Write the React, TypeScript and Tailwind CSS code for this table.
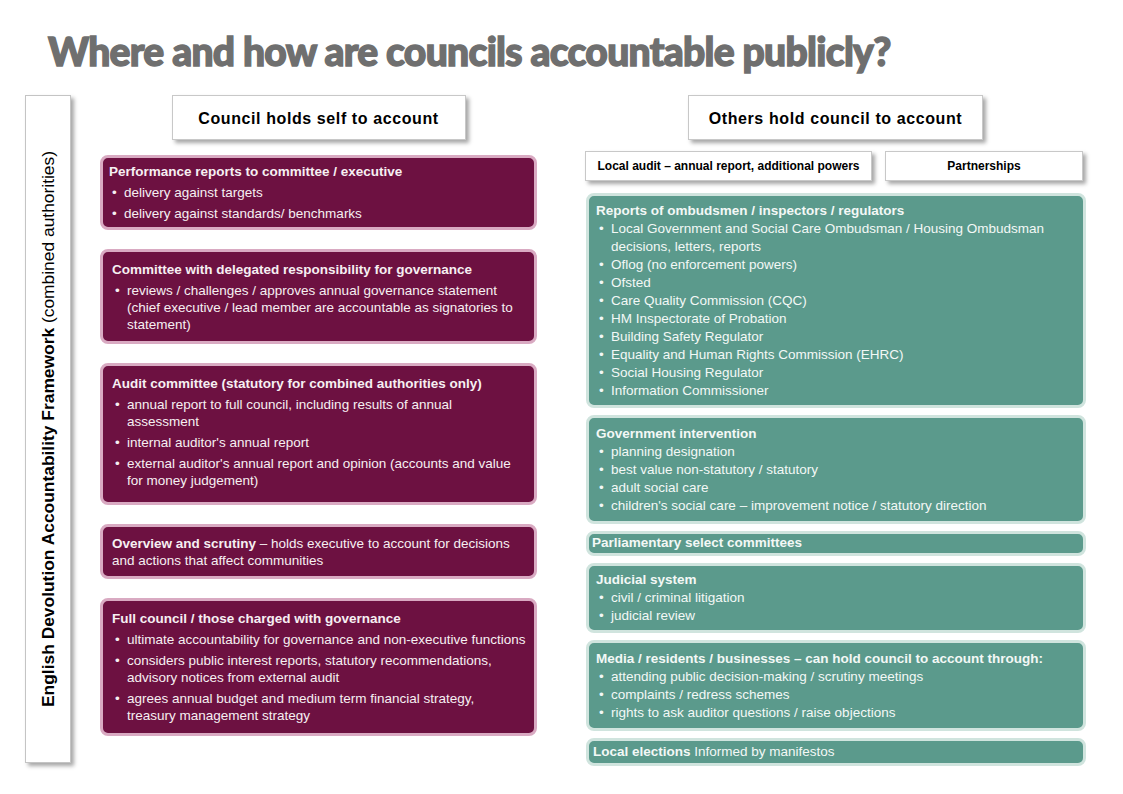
import React from "react";

interface CardProps {
  title: string;
  items: string[];
  h: string;
  pl?: string;
}

function LeftCard({ title, items, h, pl = "pl-[9px]" }: CardProps) {
  return (
    <div className={`${h} ${pl} rounded-[8px] border-[3px] border-[#d9aac2] bg-[#6d1141] pr-[8px] flex flex-col justify-center text-[#f6eff2] text-[13.5px] leading-[17px]`}>
      <div className="font-bold">{title}</div>
      <ul className="mt-[4px] flex flex-col gap-[4px]">
        {items.map((t) => (
          <li key={t} className="flex">
            <span className="w-[15px] pl-[3px] shrink-0">•</span>
            <span>{t}</span>
          </li>
        ))}
      </ul>
    </div>
  );
}

function RightCard({ title, items, h }: CardProps) {
  return (
    <div className={`${h} rounded-[8px] border-[3px] border-[#d0e4de] bg-[#5b9a8c] pl-[7px] pr-[8px] flex flex-col justify-center text-[#f3f8f6] text-[13.5px] leading-[18px]`}>
      <div className="font-bold">{title}</div>
      <ul className="flex flex-col">
        {items.map((t) => (
          <li key={t} className="flex">
            <span className="w-[15px] pl-[3px] shrink-0">•</span>
            <span>{t}</span>
          </li>
        ))}
      </ul>
    </div>
  );
}

const boxShadow = "shadow-[3px_3px_4px_rgba(0,0,0,0.35)]";

export default function App() {
  return (
    <div className="w-[1123px] h-[794px] bg-white overflow-hidden font-['Liberation_Sans',Arial,sans-serif] text-black">
      <div className="h-[95px] pt-[28px] pl-[48px]">
        <h1 className="font-['Lato',sans-serif] font-black text-[39px] leading-[46px] tracking-[-0.7px] text-[#6f6f6f] [-webkit-text-stroke:1.4px_#6f6f6f]">
          Where and how are councils accountable publicly?
        </h1>
      </div>

      <div className="flex pl-[25px]">
        {/* sidebar */}
        <div className={`w-[46px] h-[668px] border border-[#c4c4c4] bg-white ${boxShadow} flex items-center justify-center`}>
          <div className="[writing-mode:vertical-rl] rotate-180 text-[17.4px] leading-[19px] whitespace-nowrap">
            <span className="font-bold">English Devolution Accountability Framework</span> (combined authorities)
          </div>
        </div>

        {/* council holds self to account */}
        <div className="ml-[29px] w-[437px]">
          <div className={`mx-auto w-[294px] h-[45px] pt-[3px] border border-[#c8c8c8] bg-white ${boxShadow} flex items-center justify-center font-bold text-[16px] tracking-[0.6px]`}>
            Council holds self to account
          </div>
          <div className="mt-[15px] flex flex-col gap-[19px]">
            <LeftCard
              h="h-[75px]"
              pl="pl-[6px]"
              title="Performance reports to committee / executive"
              items={["delivery against targets", "delivery against standards/ benchmarks"]}
            />
            <LeftCard
              h="h-[95px]"
              title="Committee with delegated responsibility for governance"
              items={[
                "reviews / challenges / approves annual governance statement (chief executive / lead member are accountable as signatories to statement)",
              ]}
            />
            <LeftCard
              h="h-[142px] pb-[5px]"
              title="Audit committee (statutory for combined authorities only)"
              items={[
                "annual report to full council, including results of annual assessment",
                "internal auditor's annual report",
                "external auditor's annual report and opinion (accounts and value for money judgement)",
              ]}
            />
            <div className="h-[55px] rounded-[8px] border-[3px] border-[#d9aac2] bg-[#6d1141] pl-[9px] pr-[8px] flex flex-col justify-center text-[#f6eff2] text-[13.5px] leading-[17px]">
              <p>
                <span className="font-bold">Overview and scrutiny</span> – holds executive to account for decisions and actions that affect communities
              </p>
            </div>
            <LeftCard
              h="h-[138px]"
              title="Full council / those charged with governance"
              items={[
                "ultimate accountability for governance and non-executive functions",
                "considers public interest reports, statutory recommendations, advisory notices from external audit",
                "agrees annual budget and medium term financial strategy, treasury management strategy",
              ]}
            />
          </div>
        </div>

        {/* others hold council to account */}
        <div className="ml-[48px] w-[501px]">
          <div className={`mx-auto w-[295px] h-[45px] pt-[3px] border border-[#c8c8c8] bg-white ${boxShadow} flex items-center justify-center font-bold text-[16px] tracking-[0.6px]`}>
            Others hold council to account
          </div>
          <div className="mt-[11px] flex gap-[13px]">
            <div className={`w-[287px] h-[30px] border border-[#c8c8c8] bg-white ${boxShadow} flex items-center justify-center font-bold text-[12px]`}>
              Local audit – annual report, additional powers
            </div>
            <div className={`w-[198px] h-[30px] border border-[#c8c8c8] bg-white ${boxShadow} flex items-center justify-center font-bold text-[12px]`}>
              Partnerships
            </div>
          </div>
          <div className="mt-[12px] ml-[1px] w-[500px] flex flex-col gap-[7px]">
            <RightCard
              h="h-[215px]"
              title="Reports of ombudsmen / inspectors / regulators"
              items={[
                "Local Government and Social Care Ombudsman / Housing Ombudsman decisions, letters, reports",
                "Oflog (no enforcement powers)",
                "Ofsted",
                "Care Quality Commission (CQC)",
                "HM Inspectorate of Probation",
                "Building Safety Regulator",
                "Equality and Human Rights Commission (EHRC)",
                "Social Housing Regulator",
                "Information Commissioner",
              ]}
            />
            <RightCard
              h="h-[109px]"
              title="Government intervention"
              items={[
                "planning designation",
                "best value non-statutory / statutory",
                "adult social care",
                "children's social care – improvement notice / statutory direction",
              ]}
            />
            <div className="h-[25px] rounded-[8px] border-[3px] border-[#d0e4de] bg-[#5b9a8c] pl-[3px] flex items-center text-[#f3f8f6] text-[13.5px] font-bold">
              Parliamentary select committees
            </div>
            <RightCard
              h="h-[70px]"
              title="Judicial system"
              items={["civil / criminal litigation", "judicial review"]}
            />
            <RightCard
              h="h-[91px]"
              title="Media / residents / businesses – can hold council to account through:"
              items={[
                "attending public decision-making / scrutiny meetings",
                "complaints / redress schemes",
                "rights to ask auditor questions / raise objections",
              ]}
            />
            <div className="h-[28px] rounded-[8px] border-[3px] border-[#d0e4de] bg-[#5b9a8c] pl-[4px] flex items-center text-[#f3f8f6] text-[13.5px]">
              <span className="font-bold">Local elections</span>&nbsp;Informed by manifestos
            </div>
          </div>
        </div>
      </div>
    </div>
  );
}
